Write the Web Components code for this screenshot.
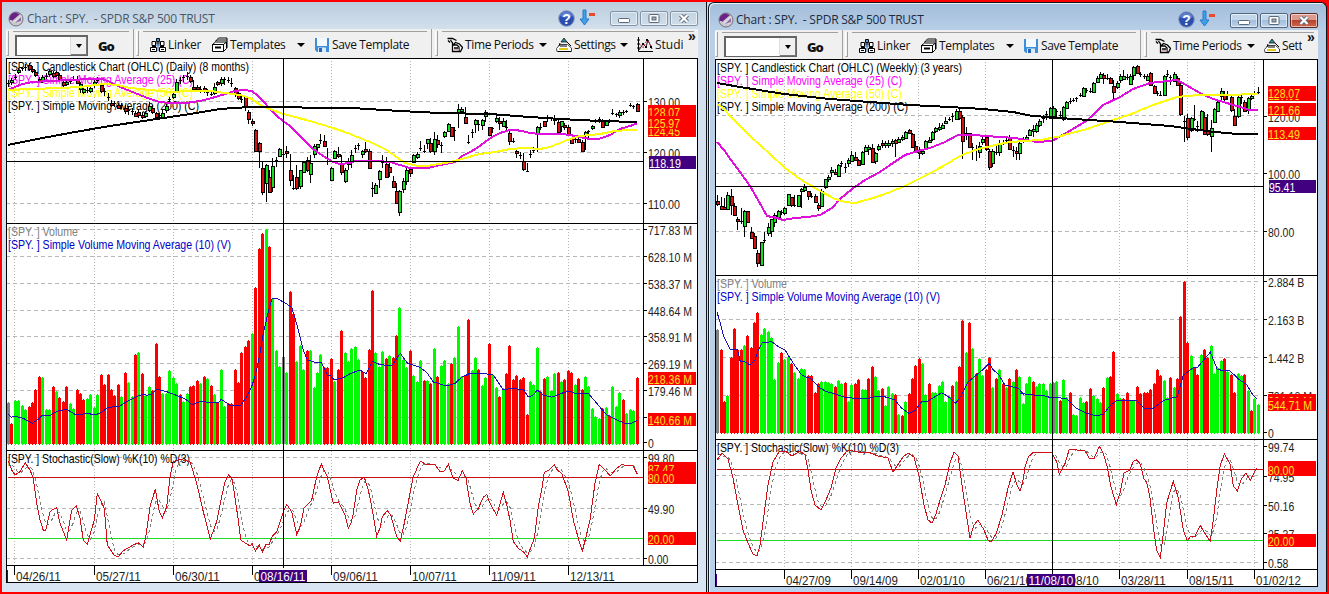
<!DOCTYPE html>
<html lang="en">
<head>
<meta charset="utf-8">
<title>Charts</title>
<style>
  html,body{margin:0;padding:0;overflow:hidden;}
  body{width:1329px;height:594px;font-family:"Open Sans","Noto Sans",sans-serif;}
</style>
</head>
<body>
<chart-desktop>
  <chart-window chart="daily" heading="Chart : SPY.&nbsp; - SPDR S&amp;P 500 TRUST"></chart-window>
  <chart-window chart="weekly" active heading="Chart : SPY.&nbsp; - SPDR S&amp;P 500 TRUST"></chart-window>
</chart-desktop>

<script>
// bars are listed in order, one token each; a segment has its own origin and scale
const CHARTS={
  daily:{
    box:[6,58,692,525], axis:643, seps:[223,450,565], x0:7.9, step:3.435, volBase:444,
    grid:[14,94,173,252,331,410,489,568],
    rows:[101,152,203,229,256,283,310,336,363,390,417,457,508,558],
    cross:[283,161], levels:[477,538],
    titles:[
      ["[SPY. ] Candlestick Chart (OHLC) (Daily) (8 months)",71,241,"#000"],
      ["[SPY. ] Simple Moving Average (25) (C)",84,185,"#f0f"],
      ["[SPY. ] Simple Moving Average (50) (C)",97,185,"#ff0"],
      ["[SPY. ] Simple Moving Average (200) (C)",110,191,"#000"],
      ["[SPY. ] Volume",236,70,"#808080"],
      ["[SPY. ] Simple Volume Moving Average (10) (V)",249,223,"#0000c8"],
      ["[SPY. ] Stochastic(Slow) %K(10) %D(3)",463,182,"#000"]
    ],
    ticks:[["130.00",102],["120.00",153],["110.00",204],["717.83 M",230],["628.10 M",257],["538.37 M",284],["448.64 M",311],["358.91 M",337],["269.19 M",364],["179.46 M",391],["",418],["0",443],["99.80",458],["49.90",509],["0.00",559]],
    tags:[["124.45",131],["128.07",112],["125.97",123],["118.19",163,1],["218.36 M",379],["140.66 M",420],["87.47",469],["80.00",478],["20.00",539]],
    dates:[["04/26/11",16],["05/27/11",96],["06/30/11",175],["08/03/11",254],["09/06/11",333],["10/07/11",412],["11/09/11",491],["12/13/11",570]],
    dateY:581, dateTag:["08/16/11",259],
    volume:[
      [280,1/3,"k366 r430 g360 g360 g376 g386 r377 r366 r326 r287 g290 g386 g386 r317 g333 r350 r363 r317 g368 g383 r326 r339 r358 g354 g341 g380 g341 r281 r311 r282 r328 r344 r311 g347 r275 g305 g347 r221 g215 r278 g345 g317 r331 r190 r287 g340 g340 g271 g290 g308 r341 g362 g338 r317 r315 r299 g308 r287 g293 r314 g341 r367 g268 g377 r368 r370 r266 r305 r215 r197 r179 g158 r22 r-97 r-140 g-154 r-103 g54 g209 g257 k229 g275 r32 r100 g242 g194 g268 r209 g209 g320 g275 g221 r262 r262 r233 g302 r266 r149 g215 g244"],
      [260,1/3,"g263 g258 g297 r333 r352 r267 r90 g276 g318 g272 r293 g285 r291 r225 g140 g297 g321 r270 g345 g363 g300 r360 g360 r369 g264 r348 g315 g300 g369 r309 g291 g197 g348 r345 r177 g330 g291 r327 g375 g350 r249 g342 g380 r408 g385 r339 r255 r357 r345 r357 r351 r462 g363 g372 g261 r393 r354 g348 g390 g339 r336 g363 r357 r330 r336 g372 r354 r387 g348 g378 g444 g468 g475 r444 g441 r465 g378 g438 g396 r417 g460 g447 g450 r352"]
    ],
    // colour, body top, body bottom, high, low
    candles:[
      [0,1/3,"d248,251,240,262 g240,247,234,255 d232,236,222,240 g209,216,204,222 d205,208,200,214 d201,204,192,212 r195,206,190,212 r206,213,198,218 r215,224,210,232 r236,246,230,250 g230,240,224,248 d228,232,220,238 g212,222,206,230 r220,228,212,234 r217,226,212,230 r225,237,218,244 r246,255,240,260 g246,252,240,258 d243,247,236,252 d236,239,228,244 r240,248,228,252 g252,268,246,278 g266,275,260,282 d270,273,262,278 g264,274,258,280 g247,256,240,264 d240,243,232,250 r256,272,250,280 d273,277,265,287 d292,295,280,302 r308,315,300,322 d309,312,302,320 r316,324,310,328 d316,319,308,326 r324,334,316,342 d330,333,318,344 d333,336,324,344 r340,347,332,352 r336,346,326,354 r346,352,335,358 g338,347,332,354 g318,330,306,336 r325,337,315,342 r340,350,335,356 d345,348,338,354 g340,352,330,354 g318,330,310,340 d298,302,290,308 g282,292,272,298 g246,272,238,276 d240,244,232,252 d232,236,226,246 d228,231,215,240 r232,242,226,248 r262,266,240,272 r262,268,254,276 d266,270,258,280 r264,272,258,280 d276,279,266,288 d282,285,270,288 g262,278,250,286 r247,252,242,258 g236,250,232,258 d236,239,230,256 d240,243,232,250 d248,251,235,262 r265,282,260,292 r280,293,270,300 d296,300,285,308 r292,320,288,334 r335,356,330,372"],
      [115,1/3,"r18,22,12,34 r45,107,42,110 r85,108,80,160 r160,230,140,240 g150,203,148,260 r185,230,165,235 g153,215,130,230 d135,138,125,155 g103,122,98,125 d118,121,116,122 r108,115,93,130 r166,194,118,212 d220,223,180,226 r187,220,150,225 g166,214,164,222 g142,170,140,173 r135,166,125,172 g145,176,120,205 g92,118,88,130 g88,97,86,110 d75,78,58,88 r79,94,60,96 d138,141,100,150 g160,196,155,198 g109,130,105,133 r118,124,97,130 r148,172,120,180 g165,197,160,203 r140,148,130,165"],
      [90,1/3,"g195,212,180,235 d175,178,165,190 d165,168,160,180 g184,193,180,205 r176,182,155,190 r184,235,178,237 d293,296,275,320 g286,308,280,312 g243,268,241,295 d215,218,195,235 r222,260,200,262 r232,245,220,262 r274,290,258,292 r304,340,280,342 g304,365,300,378 g274,298,265,310 g241,272,235,285 r236,248,230,262 g195,215,192,217 g193,202,185,208 d175,178,152,182 d182,185,165,190 g148,158,146,178 r158,182,145,190 g148,184,125,195 r150,162,135,175 d165,168,155,188 g127,137,122,145 g103,122,98,124 r112,138,110,140 d120,123,110,152 g58,66,42,115 g58,63,50,66 r80,100,50,103 d156,159,135,163 d125,128,118,145 g90,103,86,130 d103,106,90,122 g91,104,88,120 g67,78,60,96 r112,135,110,137 d115,118,112,130 g84,94,75,100 r92,97,82,120 g94,107,85,112 d110,113,90,125 r128,154,122,165 d152,155,145,158 r182,190,178,205 d195,198,185,208 r214,238,190,242 d242,245,220,246 d192,195,180,205 d180,183,170,190 g112,128,108,185 d112,115,100,120 r94,108,92,112 d85,88,75,95 d84,87,80,92 r84,90,75,105 r95,125,90,126 g94,108,92,125 r106,112,98,120 r112,133,105,135 r145,158,140,160 d148,151,145,160 r148,156,145,160 r155,182,150,185 g127,135,124,180 d122,125,120,145 g107,114,104,120 d93,96,88,98 d87,90,80,98 r92,112,88,113 g94,106,92,108 d94,97,88,100 d68,71,58,74 d72,75,68,80 g65,76,60,85 d66,69,60,75 d63,66,60,68 d46,49,40,52 d48,51,44,56 r42,63,40,66"]
    ],
    ma200:"8,145 40,138.5 75,132 110,126 150,120 190,114 220,109 250,107 283,107 320,108 360,108.5 400,111 440,113 490,114 530,117 560,119 600,121 637,122",
    ma25:"8,90 15,87 22,84 33,82 50,81 70,80 90,79 102,79 110,82 120,87 130,91 140,95 150,99 160,102 170,103 185,103 200,101 212,98 225,94 235,91 243,90 252,91 258,96 264,102 270,109 277,116 283,121 290,126 297,133 305,141 313,149 320,154 328,159 333,162 340,164 350,163 355,161 365,161 378,161 390,162 400,165 410,168 420,168.5 430,167.5 440,165 455,162 462,156 470,152 477,148 485,142 492,137 500,133 508,130.5 515,130 522,131 530,133 540,134 550,134.5 562,134 570,135 580,137 590,139 600,138.5 610,135 620,129 630,126 637,123.5",
    ma50:"8,90 30,89 60,88 80,87 95,85 103,84 118,85 130,88 150,90 170,92 190,91 210,91 225,93 240,95 250,98 262,106 275,111 283,114 295,117 310,121 330,127 345,132 355,136 370,142 385,149 395,156 405,163 418,166 430,165.5 445,163 455,161 465,158 480,154 495,152 510,149 525,148 540,149 550,147 560,143 570,139 580,136 600,134 615,131 630,130 637,130",
    volMa:[
      [0,280,1/3,"24,403 34,412 45,409 70,415 97,430 115,418 127,405 148,408 160,400 175,393 200,388 229,405 262,400 285,405 305,397 322,383 360,378 380,365 410,350 430,342 440,346 457,342 470,328 500,335 540,350 560,360 575,374 600,365 655,368 664,358 690,376 722,376 740,350 757,315 770,270 780,220 790,160 805,95 817,54 830,55 860,72 875,82 885,115 895,150 910,210 922,240 950,248 964,247 975,270 982,285 990,285 1003,300 1030,293"],
      [350,260,1/3,"0,341 30,330 48,341 67,304 90,314 125,317 151,280 172,309 210,322 230,337 250,366 290,378 315,370 335,352 360,340 400,340 430,345 460,390 480,386 520,388 535,411 550,405 562,390 580,405 605,412 640,398 660,393 675,400 700,402 715,400 740,430 770,465 800,480 830,492 850,488 862,480"]
    ],
    stoch:[
      [0,440,1/3,"24,62 35,90 45,105 60,95 76,68 90,90 100,115 110,190 120,240 130,271 137,271 150,215 160,208 170,203 180,250 200,300 215,210 229,197 240,235 250,300 262,313 283,240 292,160 313,205 322,315 343,346 355,350 370,332 400,315 415,308 430,322 437,290 450,200 466,148 478,215 487,233 500,200 510,110 520,65 540,58 570,65 590,130 610,215 631,297 650,245 665,170 675,125 686,103 697,120 715,240 722,300 750,318 757,312 766,333 778,315 787,336 799,312 808,312 817,288 830,275 850,215 860,193 875,215 890,283 901,260 912,205 935,180 950,110 964,72 982,110 1000,190 1015,186 1035,225 1045,265"],
      [350,440,1/3,"3,250 10,220 20,150 30,120 43,112 55,150 65,200 80,288 90,265 97,230 112,212 122,225 140,290 151,303 163,250 180,160 190,110 211,63 225,72 255,74 270,95 283,93 295,73 310,115 324,122 337,92 348,115 360,190 370,222 385,205 400,172 410,163 420,190 440,226 460,157 470,195 480,240 490,305 505,325 520,335 532,350 553,295 565,200 575,150 583,97 600,88 613,74 622,90 635,100 655,155 670,240 685,295 697,334 708,290 720,240 735,130 748,73 781,107 800,85 815,74 850,78 862,102"]
    ]
  },
  weekly:{
    box:[715,59,603,528], axis:1263, seps:[275,439,569], x0:717.2, step:3.357, volBase:433,
    grid:[784,851,918,985,1052,1119,1187,1254],
    rows:[115,173,231,281,319,357,395,445,475,504,533,562],
    cross:[1052,186], levels:[469,540],
    titles:[
      ["[SPY. ] Candlestick Chart (OHLC) (Weekly) (3 years)",72,245,"#000"],
      ["[SPY. ] Simple Moving Average (25) (C)",85,185,"#f0f"],
      ["[SPY. ] Simple Moving Average (50) (C)",98,185,"#ff0"],
      ["[SPY. ] Simple Moving Average (200) (C)",111,191,"#000"],
      ["[SPY. ] Volume",288,70,"#808080"],
      ["[SPY. ] Simple Volume Moving Average (10) (V)",301,223,"#0000c8"],
      ["[SPY. ] Stochastic(Slow) %K(10) %D(3)",452,182,"#000"]
    ],
    ticks:[["120.00",117],["100.00",174],["80.00",232],["2.884 B",282],["2.163 B",320],["1.442 B",358],["721.18 M",396],["0",433],["99.74",447],["74.95",477],["50.16",506],["25.37",534],["0.58",563]],
    tags:[["127.05",95],["128.07",93],["121.66",110],["113.49",134],["95.41",187,1],["664.31 M",401],["544.71 M",405],["79.95",468],["80.00",470],["20.00",541]],
    dates:[["04/27/09",786],["09/14/09",853],["02/01/10",920],["06/21/10",987],["11/08/10",1054],["03/28/11",1121],["08/15/11",1189],["01/02/12",1256]],
    dateY:585, dateTag:["11/08/10",1027],
    volume:[
      [120,1/3,"k628 r686 r842 g824 r712 r623 r686 r688 g674 r645 r681 r605 r576 g641 g623 g632 g652 g776 g725 r695 g718 g710 r729 g755 g775 g744 g747 r765 r765 r815 r788 g783 g783 g785 g788 r797 g779 g788 r786 g842 g792 r788 r776 g806 g806 r773 r738 g767 g809 r804 g855 g797 g820 r822 g882 r884 g842 r819 r773 r735 r713 g729 g822 r788 g816 g816 g795 g783 g842 g829 r795 g783 r738 r600 g695 r605 g683 r758 g714 g765 r746 r710 g800 r773 g746 r788 g800 r773 g783 r746 g767 g848 g788 g767 r783"],
      [60,.3406,"g957 g948 g948 g968 g948 k945 g942 r998 g938 g988 r976 g1038 g1043 g988 g1004 r1000 r963 g985 g991 g1003 r960 g932 r928 r854 g978 g993 r993 r975 g998 g998 r957 r978 r976 r976 r966 r948 r907 r925 g940 g990 r932 g960 r933 r752 r648 r828 g866 r902 r922 g862 r849 r872 g836 g918 g900 g881 r875 g912 r922 r975 g919 g925 r922 g968 r1028 g993 g1010"]
    ],
    candles:[
      [120,1/3,"r244,252,225,258 r258,266,230,267 r262,268,235,270 g224,268,215,270 r228,254,208,285 r259,286,250,288 r298,303,290,330 d304,307,265,312 g274,318,270,350 r274,306,272,310 r335,355,320,358 r349,385,338,387 r400,428,390,440 g367,436,365,438 d361,364,335,370 g320,340,310,348 g298,333,296,350 g284,305,278,320 g273,290,270,300 d275,278,270,284 g265,278,262,286 g223,256,221,258 r232,256,230,262 d255,258,225,260 g226,258,224,260 g208,214,204,265 g202,210,192,215 r214,228,212,240 d228,231,218,235 r229,246,222,248 r256,263,250,272 g212,258,208,262 g178,202,176,208 g172,176,166,185 g150,156,142,172 r155,163,148,166 g136,168,132,170 d130,133,122,140 d140,143,128,160 g119,130,113,140 g104,122,92,124 r110,120,95,124 r121,136,118,138 g97,133,94,135 g82,92,76,96 g82,86,74,105 r84,127,72,129 g100,122,96,132 g78,88,72,92 r70,74,60,85 g68,76,62,84 g68,75,60,85 g64,70,56,80 r60,70,56,110 g58,65,52,70 g50,58,45,62 g36,53,34,56 r29,38,26,42 r43,80,40,82 r78,95,62,97 r92,98,80,118 g93,100,86,105 g63,83,60,86 g60,64,50,68 g37,58,34,62 g24,34,20,38 g22,26,10,34 g15,24,8,28 g2,8,-10,12 d-3,0,-10,4 d-12,-9,-20,5 g-27,-3,-32,0 r-27,-5,-34,0 r-10,62,-14,118 r38,44,20,60 r40,80,38,82 d82,85,70,120 d88,91,76,122 g77,97,65,115 g58,65,50,75 r52,88,48,92 r92,140,88,150 g92,128,86,142 d95,98,75,105 g70,97,60,108 d68,71,60,76 d60,63,52,70 r50,87,45,90 d90,93,78,110 r92,98,80,120 g68,100,64,120 g58,62,52,68 g50,55,46,62 g31,44,26,46 g28,33,15,50"],
      [60,.3406,"g190,208,185,215 g180,190,172,196 d170,173,162,185 d160,163,150,175 g140,170,138,172 g140,165,136,168 d150,153,145,168 d162,165,150,172 g138,172,136,178 g124,140,120,142 d120,123,112,128 d117,120,112,124 d113,116,108,122 d102,105,98,110 g83,105,80,107 d88,91,82,96 d90,93,82,98 g68,93,64,95 g52,65,48,68 g40,52,36,56 r44,52,38,70 d52,55,40,60 r54,68,50,70 r77,93,60,118 g68,78,62,84 g48,58,42,68 g48,55,28,60 d50,53,42,60 g46,70,40,74 g22,45,18,60 r18,38,14,42 d42,45,34,50 d48,51,40,56 g48,58,42,62 r37,73,34,76 r75,97,72,100 d97,100,90,105 d102,105,92,106 g48,103,44,106 d42,45,30,50 d50,53,44,72 g40,62,36,66 r54,72,48,76 r72,160,68,164 d180,183,165,240 r170,225,160,235 g170,206,166,210 d172,175,132,180 d195,198,180,210 g150,205,148,208 r168,216,154,220 r205,218,158,222 g200,223,175,270 g143,182,140,184 g122,150,118,152 g90,105,82,118 r103,115,90,122 d100,103,92,118 r108,148,104,152 r163,192,145,195 g110,165,106,170 d108,111,96,130 r122,150,116,152 g112,146,108,160 g105,112,96,118 d97,100,92,104 d94,97,80,100"]
    ],
    ma200:"717,83 740,87 784,94 830,99 870,102 910,105 950,107 983,109 1013,112 1030,115.5 1052,117.5 1120,122 1170,126 1210,131.5 1237,134 1258,134",
    ma25:"717,142 724,150 731,160 740,172 750,186 758,200 767,216 777,218 783,220 795,218 808,217 820,215 832,208 840,199 852,189 865,180 880,172 890,165 905,155 918,151 930,148 945,142 958,135 970,134.5 985,136 1000,137 1015,138 1026,140 1037,142 1052,141 1067,132.5 1087,120.5 1103,105 1120,97 1133,89 1150,83 1177,80 1187,85.5 1200,93 1213,99 1227,103 1240,107 1250,110 1258,110",
    ma50:"717,104 722,107 733,119 751,137 770,154 785,168 800,179 820,191 835,199 845,202 855,203 870,199 885,194 905,186 925,176 945,165 960,156 975,150 995,145 1010,142 1025,141 1040,140 1057,137 1087,129 1110,121 1130,114.5 1153,105 1177,97 1193,95.5 1225,95 1258,94",
    volMa:[
      [705,120,1/3,"36,576 46,610 55,645 67,672 76,688 97,688 106,725 120,726 136,735 150,720 160,690 172,668 200,665 220,680 240,690 265,730 290,765 320,778 340,800 360,813 390,822 420,832 450,835 490,835 510,830 530,828 545,832 570,840 590,865 612,880 630,872 650,845 665,845 690,830 710,818 730,830 752,850 770,825 790,785 830,752 853,730 865,750 880,762 900,795 940,805 955,822"],
      [1020,60,[1/3,.3406],"0,978 30,983 70,985 95,992 110,990 140,995 170,1023 200,1037 230,1045 250,1040 270,1015 290,1000 350,1000 375,1025 400,1022 430,1000 472,988 490,925 520,903 532,903 550,882 571,858 592,908 610,912 630,913 660,940 680,953 700,985 710,995"]
    ],
    stoch:[
      [0,0,1,"717,460 722,453 728,459 733,478 738,505 743,530 748,543 753,554 757,556 760,545 764,515 768,485 773,462 779,452 785,451 792,456 800,451 805,455 808,470 811,490 815,505 821,510 826,500 831,488 836,468 841,458 848,450 858,452 868,452 878,456 888,458 893,472 897,466 903,457 908,453 914,457 919,476 924,505 928,520 932,523 936,514 940,500 945,485 950,463 954,452 958,456 962,485 966,512 970,538 974,525 978,520 984,530 988,540 991,542 996,534 1002,515 1008,488 1013,472 1017,485"],
      [1020,60,[1/3,.3406],"0,1265 8,1240 15,1195 25,1165 40,1152 95,1152 110,1180 118,1217 135,1185 148,1143 195,1147 208,1170 222,1171 238,1134 250,1155 262,1195 272,1250 289,1306 300,1270 312,1213 330,1203 340,1178 350,1174 360,1185 372,1230 380,1240 390,1285 400,1370 410,1440 421,1461 430,1390 440,1300 460,1237 475,1285 490,1380 502,1412 511,1399 525,1399 541,1366 552,1386 571,1413 580,1350 592,1250 601,1190 613,1157 630,1185 640,1250 652,1265 665,1228 678,1213 691,1235 710,1198"]
    ]
  }
};

const ICONS={
  linker:`<path d="M8 2v12M3 8h10" stroke="#2a6fb5"/><g fill="#fff" stroke="#000"><path d="M6.500 1.500h3v3h-3zM2 4.500h3.500v4H2zM10.500 4.500H14v4h-3.500zM.5 10.500h6v4h-6zM9.500 10.500h6v4h-6z"/></g><path d="M2 9.500h4M10 9.500h4M6 6h4M2 12.500h3M11 12.500h3" stroke="#000"/><path d="M7 2h2v2H7z" fill="#4aa3df"/>`,
  templates:`<path d="M.5 7.500h11v7H.5zM.5 7.500l3-2.500h11l-3 2.500zM11.500 14.500l3-3V5M3 4.500l2-1.500h10v8M5 2.500L6.500 1H15v2" fill="#fff" stroke="#000"/><path d="M3 10.500h6" stroke="#000" stroke-width="2"/>`,
  save:`<path d="M1 1h14v14H3l-2-2z" fill="#3d8edb"/><path d="M3 1h10v8H3z" fill="#f4f9ff"/><path d="M4 10.500h8V15H4z" fill="#dce9f6"/><path d="M5 11h3v4H5z" fill="#2a67b2"/>`,
  time:`<path d="M5.500 7l4-1.500 3 1.500 2.500 3.500-2 4H5.500z" fill="#fff"/><path d="M.5 1.500h5l4 2M1 3.500l2 2M3.500 3l2 3v8.500h8l2-4-3-3.500-4-1.500-2.500 2.500M6 8h4l2 2v4M7 11h4" fill="none" stroke="#000" stroke-width="1.300"/><path d="M7 12h5v1.500H7z" fill="#caa"/>`,
  settings:`<path d="M5 5l3-4 3 4z" fill="#2a8c9c" stroke="#000" stroke-width=".7"/><path d="M.5 11.500L4 7.500h7.500l4 3.500v3.500H1z" fill="#fff" stroke="#444"/><path d="M3 12h9" stroke="#dfc916" stroke-width="2"/><path d="M4 6l-1 3M11 5l4 4M4 9h7M2 14.500h13" stroke="#000"/>`,
  studies:`<path d="M1.500 0v14.500H16M0 3h3M0 7h3M0 11h3" fill="none" stroke="#000"/><path d="M2 13l4-6 3 3 2-7 4 9" fill="none" stroke="#222"/><path d="M2 6l4 5 4-8 5 7" fill="none" stroke="#d02040" stroke-dasharray="2 1"/><path d="M5 6h2v2H5zM9 2h2v2H9zM13 9h2v2h-2zM8 9h2v2H8z"/>`
};
const icon=name=>`<svg width="16" height="16" viewBox="0 0 16 16">${ICONS[name]}</svg>`;

class ChartDesktop extends HTMLElement{
  constructor(){
    super();
    this.attachShadow({mode:'open'}).innerHTML=`
    <style>
      :host{display:flex;box-sizing:border-box;width:1329px;height:594px;padding:2px;background:#fe0000;}
      .frame{display:flex;flex:1;gap:1px;background:linear-gradient(90deg,#c9d9ea 1300px,#fe0000 0);}
    </style>
    <div class="frame"><slot></slot></div>`;
  }
}

class TitleBar extends HTMLElement{
  connectedCallback(){
    const active=this.hasAttribute("active");
    this.attachShadow({mode:'open'}).innerHTML=`
    <style>
      :host{display:flex;align-items:center;height:100%;font-size:12px;color:${active?"#1c2b3d":"#47586b"};}
      .orb{margin:${active?"6px 2px 0 3px":"6px 3px 0 2px"};}
      .name{margin-top:5px;white-space:pre;letter-spacing:-.23px;}
      .help{margin:6px 4px 0 auto;}
      .arrow{margin:4px 15px 0 0;}
      .buttons{display:flex;gap:2px;margin-top:${active?7:6}px;}
      .btn{width:28px;height:15px;box-sizing:border-box;border:1px solid ${active?"#53677f":"#8393a6"};border-radius:2px;
        box-shadow:inset 0 0 0 1px rgba(255,255,255,.55);display:flex;align-items:center;justify-content:center;
        background:${active?"linear-gradient(#c3d6ea 48%,#a3bedb 50%,#bdd4ec)":"transparent"};}
      .close{${active?"background:linear-gradient(#dc9a8f 45%,#b9402c 50%,#cc6a50);border-color:#5c2a26;":""}}
    </style>
    <svg class="orb" width="16" height="16" viewBox="0 0 16 16"><circle cx="8" cy="8" r="7" fill="#c9c9ce" stroke="#77717f"/><path d="M1.500 9A6.500 6.500 0 0 1 10 1.800Q4 4 5 9z" fill="#6a2385"/><path d="M2 5Q6 0 12 3L4 10z" fill="#6a2385"/><path d="M5 11L13 4Q15 8 12 12z" fill="#dcdce2"/><path d="M7 12l6-6v4z" fill="#8e6aa4"/></svg>
    <span class="name">${this.getAttribute("heading").replace("&","&amp;")}</span>
    <svg class="help" width="17" height="17" viewBox="0 0 17 17"><circle cx="8.500" cy="8.500" r="7.800" fill="#2b4fb0" stroke="#8a9ab5"/><path d="M2 6A7 7 0 0 1 15 6Q8 9 2 6z" fill="#6f92dd" opacity=".7"/><text x="8.500" y="13.500" font-family="Liberation Sans,sans-serif" font-size="14" font-weight="bold" fill="#fff" text-anchor="middle">?</text></svg>
    <svg class="arrow" width="16" height="17" viewBox="0 0 16 17"><path d="M4 1h3v9h3l-4.500 6L1 10h3z" fill="#3fa0e8" stroke="#2a78c8"/><path d="M10 4h6v3h-6z" fill="#e84a2c"/></svg>
    <div class="buttons">
      <span class="btn"><svg width="12" height="9" viewBox="0 0 12 9"><rect x=".5" y="4.500" width="11" height="4" rx="1" fill="#fff" stroke="#5b6878"/></svg></span>
      <span class="btn"><svg width="12" height="9" viewBox="0 0 12 9"><rect x="1" y=".5" width="10" height="8" rx="1" fill="#fff" stroke="#5b6878"/><rect x="4" y="3" width="4" height="3" fill="#9ab" stroke="#5b6878"/></svg></span>
      <span class="btn close"><svg width="12" height="9" viewBox="0 0 12 9"><path d="M2.500 1l7 7M9.500 1l-7 7" stroke="#5b6878" stroke-width="4"/><path d="M2.500 1l7 7M9.500 1l-7 7" stroke="#fff" stroke-width="2.200"/></svg></span>
    </div>`;
  }
}

class ToolBar extends HTMLElement{
  connectedCallback(){
    const active=this.hasAttribute("active");
    this.attachShadow({mode:'open'}).innerHTML=`
    <style>
      :host{display:flex;background:#f0f0f0;height:100%;font-size:12px;color:#111;overflow:hidden;}
      .band{display:flex;align-items:center;position:relative;box-sizing:border-box;padding-top:2px;border-right:1px solid #a0a0a0;}
      .band::before{content:"";position:absolute;left:7px;right:4px;top:2px;height:1px;background:#a0a0a0;}
      .band::after{content:"";position:absolute;left:0;top:2px;bottom:2px;width:1px;border:1px solid #a0a0a0;border-left-color:#fff;border-top:0;}
      .b1{width:128px;padding-left:9px;}
      .b2{width:296px;margin-left:2px;padding-left:14px;}
      .b3{flex:1;min-width:0;margin-left:3px;padding-left:${active?11:12}px;border:0;}
      .clip{display:flex;align-items:center;flex:none;width:${active?147:236}px;overflow:hidden;}
      .combo{display:flex;box-sizing:border-box;width:73px;height:21px;border:1px solid #646464;border-width:2px 1px 1px 2px;background:#fff;margin-top:1px;}
      .drop{margin-left:auto;width:16px;background:#f0f0f0;border-left:1px solid #ddd;box-shadow:inset -1px -1px #777;display:flex;align-items:center;justify-content:center;}
      .tri{border:4px solid transparent;border-top-color:#000;border-bottom:0;flex:none;}
      .drop .tri{border-width:4px 3.500px 0;}
      .go{margin:3px 0 0 10px;font:800 13px "Open Sans",sans-serif;letter-spacing:-1px;}
      .item{display:inline-flex;align-items:center;gap:2px;white-space:pre;flex:none;}
      .item svg{flex:none;}
      .more{margin:-17px 0 0 5px;font:bold 14px/14px "Liberation Sans",sans-serif;}
    </style>
    <div class="band b1"><span class="combo"><span class="drop"><span class="tri"></span></span></span><span class="go">Go</span></div>
    <div class="band b2">
      <span class="item" style="width:62px;letter-spacing:-.25px">${icon("linker")}Linker</span>
      <span class="item" style="width:85px;letter-spacing:-.3px">${icon("templates")}Templates</span>
      <span class="tri" style="margin-right:9px"></span>
      <span class="item" style="letter-spacing:-.35px">${icon("save")}Save Template</span>
    </div>
    <div class="band b3">
      <div class="clip">
        <span class="item" style="width:92px;letter-spacing:-.35px">${icon("time")}Time Periods</span>
        <span class="tri" style="margin-right:9px"></span>
        <span class="item" style="width:64px;letter-spacing:-.35px">${icon("settings")}Settings</span>
        <span class="tri" style="margin-right:9px"></span>
        <span class="item">${icon("studies")}Studies</span>
      </div>
      <span class="more">»</span>
    </div>`;
  }
}

class StockChart extends HTMLElement{
  connectedCallback(){
    this.c=CHARTS[this.getAttribute("data")];
    this.attachShadow({mode:'open'}).innerHTML=`
    <style>
      :host{display:block;line-height:0;}
      text{font:12px "Liberation Sans",sans-serif;white-space:pre;}
    </style>
    ${this.draw()}`;
  }
  textWidth(s){
    const w={".":3," ":3,"M":9,"B":7,"/":5};
    return [...s].reduce((n,ch)=>n+(w[ch]||5.8),0);
  }
  text(s,x,y,fill,len){
    if(!s)return "";
    return `<text x="${x}" y="${y}" fill="${fill}" textLength="${(len||this.textWidth(s)).toFixed(1)}" lengthAdjust="spacingAndGlyphs">${s}</text>`;
  }
  points(segments){
    const out=[];
    segments.forEach(([ox,oy,k,list])=>{
      const [kx,ky]=Array.isArray(k)?k:[k,k];
      list.split(" ").forEach(p=>{
        const [x,y]=p.split(",").map(Number);
        out.push([ox+x*kx,oy+y*ky]);
      });
    });
    return out;
  }
  line(pts,attrs){
    return `<polyline points="${pts.map(p=>p[0].toFixed(1)+","+p[1].toFixed(1)).join(" ")}" fill="none" ${attrs}/>`;
  }
  valueAt(pts,x){
    let i=1;
    while(i<pts.length-1&&pts[i][0]<x)i++;
    const [a,b]=[pts[i-1],pts[i]];
    const t=Math.max(0,Math.min(1,(x-a[0])/(b[0]-a[0]||1)));
    return a[1]+(b[1]-a[1])*t;
  }
  // %D is the three bar average of %K
  smooth(pts){
    const {x0,step}=this.c,last=pts[pts.length-1][0],out=[];
    for(let x=x0;x<=last+1;x+=step){
      out.push([x,(this.valueAt(pts,x)+this.valueAt(pts,x-step)+this.valueAt(pts,x-2*step))/3]);
    }
    return out;
  }
  volume(){
    const {x0,step,volBase,volume}=this.c;
    const fill={r:"#fb0000",g:"#00fb00",k:"#808080"};
    let i=0,s="";
    volume.forEach(([oy,k,list])=>list.split(" ").forEach(t=>{
      const x=Math.round(x0+step*i++),y=Math.round(oy+ +t.slice(1)*k);
      s+=`<path d="M${x-1} ${volBase}V${y+1}h1v-1h1v1h1V${volBase}z" fill="${fill[t[0]]}"/>`;
      s+=`<rect x="${x}" y="${volBase}" width="1" height="1" fill="${fill[t[0]]}"/>`;
    }));
    return s;
  }
  candles(){
    const {x0,step,candles}=this.c;
    let i=0,s="";
    candles.forEach(([oy,k,list])=>list.split(" ").forEach(t=>{
      const x=Math.round(x0+step*i++);
      const [top,bottom,hi,lo]=t.slice(1).split(",").map(v=>Math.round(oy+v*k));
      s+=`<rect x="${x}" y="${hi}" width="1" height="${Math.max(1,lo-hi)}"/>`;
      if(t[0]=="d"){
        s+=`<rect x="${x-1}" y="${top}" width="3" height="1"/>`;
      }else{
        s+=`<rect x="${x-1}" y="${top}" width="4" height="${Math.max(3,bottom-top+1)}"/>`;
        s+=`<rect x="${x}" y="${top+1}" width="2" height="${Math.max(1,bottom-top-1)}" fill="${t[0]=="r"?"#d81010":"#14e020"}"/>`;
      }
    }));
    return s;
  }
  draw(){
    const c=this.c,[bx,by,bw,bh]=c.box,right=bx+bw-1,bottom=by+bh-1,last=c.seps[2];
    const h=(y,x1,x2,a)=>`<path d="M${x1} ${y+.5}H${x2}" fill="none" ${a}/>`;
    const v=(x,y1,y2,a)=>`<path d="M${x+.5} ${y1}V${y2}" fill="none" ${a}/>`;
    const black='stroke="#000"';
    const k=this.points(c.stoch);
    let s=`<rect x="${bx}" y="${by}" width="${bw}" height="${bh}" fill="#fff"/>`;
    c.grid.forEach(x=>s+=v(x,by,last,'stroke="#b4b4b4" stroke-dasharray="1 2"'));
    c.rows.forEach(y=>s+=h(y,bx,c.axis-3,'stroke="#b8b8b8" stroke-dasharray="4 3"'));
    c.titles.forEach(([t,y,w,f])=>s+=this.text(t,bx+2,y,f,w));
    s+=this.volume();
    s+=this.line(this.points(c.volMa),'stroke="#1a10b8" stroke-width="1"');
    s+=`<rect x="${bx+2}" y="${c.levels[0]}" width="${c.axis-bx-2}" height="1" fill="#c81010"/>`;
    s+=`<rect x="${bx+2}" y="${c.levels[1]}" width="${c.axis-bx-2}" height="1" fill="#20dc20"/>`;
    s+=this.line(this.smooth(k),'stroke="#7c8078" stroke-width="1" stroke-dasharray="3 3"');
    s+=this.line(k,'stroke="#d01018" stroke-width="1"');
    s+=this.candles();
    const ma=(name,color)=>this.line(this.points([[0,0,1,c[name]]]),`stroke="${color}" stroke-width="2" stroke-linejoin="round"`);
    s+=ma("ma25","#e010dc")+ma("ma50","#fcfc10")+ma("ma200","#000");
    s+=v(c.cross[0],by,bottom-14,black)+h(c.cross[1],bx,c.axis,black);
    c.seps.forEach(y=>s+=h(y,bx,right,black));
    s+=v(c.axis,by,last,black);
    c.ticks.forEach(([t,y])=>s+=h(y-1,c.axis,c.axis+4,black)+this.text(t,c.axis+5,y+4.500,"#222"));
    c.tags.forEach(([t,y,dark])=>{
      s+=`<rect x="${c.axis+(dark?6:5)}" y="${y-6.500|0}" width="${dark?47:48}" height="13" fill="${dark?"#400080":"#fb0000"}"/>`;
      s+=this.text(t,c.axis+(dark?6:5),y+4.500,dark?"#fff":"#ffe020");
    });
    c.grid.forEach(x=>s+=v(x,last,last+10,black));
    c.dates.forEach(([t,x])=>s+=this.text(t,x,c.dateY,"#222"));
    const [tag,tx]=c.dateTag;
    s+=`<rect x="${tx}" y="${c.dateY-11}" width="48" height="12" fill="#400080"/>`+this.text(tag,tx+1.500,c.dateY,"#fff");
    s+=`<rect x="${bx}" y="${c.dateY-11}" width="2" height="12" fill="#400080"/>`;
    s+=`<rect x="${bx+.5}" y="${by+.5}" width="${bw-1}" height="${bh-1}" fill="none" stroke="#000"/>`;
    return `<svg width="${bw}" height="${bh}" viewBox="${c.box.join(" ")}" shape-rendering="crispEdges">${s}</svg>`;
  }
}

class ChartWindow extends HTMLElement{
  connectedCallback(){
    const active=this.hasAttribute("active"),flag=active?"active":"";
    this.attachShadow({mode:'open'}).innerHTML=`
    <style>
      :host{display:grid;box-sizing:border-box;grid-template-rows:${active?"27px 29px 1fr":"27px 29px 1fr"};
        width:${active?619:705}px;height:590px;flex:none;
        padding:${active?"0 8px 0 6px":"0 8px 0 4px"};
        border:solid #10151c;border-width:${active?"1px 1px 0 1px":"0 1px 0 0"};
        ${active?"border-radius:6px 6px 0 0;box-shadow:inset 1px 1px #e8f2fb;":""}
        background:${active?"linear-gradient(#a2bcda,#b9cfe8 28px,#b9d1ea)":"linear-gradient(#bccddd,#d3e0ed 28px,#d9e5f2)"};}
    </style>
    <title-bar ${flag}></title-bar>
    <tool-bar ${flag}></tool-bar>
    <stock-chart data="${this.getAttribute("chart")}"></stock-chart>`;
    this.shadowRoot.querySelector("title-bar").setAttribute("heading",this.getAttribute("heading"));
  }
}

// the title bar reads its heading when connected, so the window is defined before it
customElements.define('chart-desktop',ChartDesktop);
customElements.define('chart-window',ChartWindow);
customElements.define('title-bar',TitleBar);
customElements.define('tool-bar',ToolBar);
customElements.define('stock-chart',StockChart);
</script>
</body>
</html>
